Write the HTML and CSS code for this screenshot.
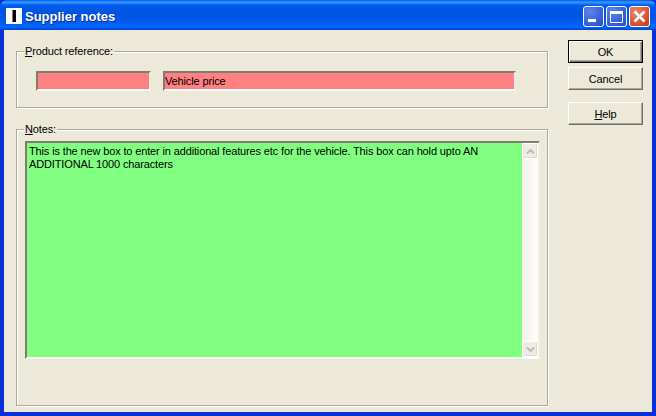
FILE: index.html
```html
<!DOCTYPE html>
<html lang="en">
<head>
<meta charset="utf-8">
<title>Supplier notes</title>
<link rel="stylesheet" href="styles.css">
</head>
<body>
<div class="window">
  <header class="titlebar">
    <span class="app-icon"><span class="app-icon-bar"></span></span>
    <span class="title">Supplier notes</span>
    <div class="caption-buttons">
      <span class="cap cap-blue">
        <svg width="21" height="21" viewBox="0 0 21 21"><rect x="5" y="13" width="8" height="3" fill="#fff"/></svg>
      </span>
      <span class="cap cap-blue">
        <svg width="21" height="21" viewBox="0 0 21 21"><path d="M4.5 6.5h12v10h-12z" fill="none" stroke="#fff"/><rect x="4" y="5" width="13" height="3" fill="#fff"/></svg>
      </span>
      <span class="cap cap-red">
        <svg width="21" height="21" viewBox="0 0 21 21"><path d="M5.5 5.5l10 10M15.5 5.5l-10 10" stroke="#fff" stroke-width="2.6" fill="none"/></svg>
      </span>
    </div>
  </header>
  <main class="client">
    <div class="left">
      <fieldset class="group group-ref">
        <legend class="group-label"><u>P</u>roduct reference:</legend>
        <div class="ref-row">
          <span class="field field-short"></span>
          <span class="field field-long">Vehicle price</span>
        </div>
      </fieldset>
      <fieldset class="group group-notes">
        <legend class="group-label"><u>N</u>otes:</legend>
        <div class="memo">
          <div class="memo-text">This is the new box to enter in additional features etc for the vehicle. This box can hold upto AN ADDITIONAL 1000 characters</div>
          <div class="scrollbar">
            <span class="sb-btn">
              <svg width="9" height="7" viewBox="0 0 9 7"><path d="M1 5.5l3.5-3.5 3.5 3.5" fill="none" stroke="#bdbaae" stroke-width="2"/></svg>
            </span>
            <span class="sb-track"></span>
            <span class="sb-btn">
              <svg width="9" height="7" viewBox="0 0 9 7"><path d="M1 1.5l3.5 3.5 3.5-3.5" fill="none" stroke="#bdbaae" stroke-width="2"/></svg>
            </span>
          </div>
        </div>
      </fieldset>
    </div>
    <div class="actions">
      <button class="btn btn-default" type="button">OK</button>
      <button class="btn" type="button">Cancel</button>
      <button class="btn btn-help" type="button"><u>H</u>elp</button>
    </div>
  </main>
</div>
</body>
</html>
```

FILE: styles.css
```css
* { box-sizing: border-box; }
html, body { margin: 0; padding: 0; }
body {
  width: 656px;
  height: 416px;
  overflow: hidden;
  background: #0831d9;
  font-family: "Liberation Sans", Arial, sans-serif;
  font-size: 11px;
  letter-spacing: -0.14px;
  color: #000;
}
.window {
  width: 656px;
  height: 416px;
  display: flex;
  flex-direction: column;
}
.titlebar {
  height: 30px;
  flex: none;
  display: flex;
  align-items: center;
  padding: 0 6px;
  border-radius: 7px 7px 0 0;
  background: linear-gradient(180deg, #0058ee 0, #3a93ff 2px, #288eff 3px, #0060f0 5px, #0055e5 9px, #0055e5 18px, #0062f7 25px, #0066ff 27px, #005bf0 28px, #0040d0 30px);
}
.app-icon {
  width: 16px;
  height: 16px;
  flex: none;
  background: #fff;
  display: flex;
  justify-content: center;
  align-items: center;
  margin-top: 2px;
}
.app-icon-bar {
  width: 4px;
  height: 12px;
  background: #000;
  border-left: 1px solid #777;
}
.title {
  margin-left: 3px;
  margin-top: 3px;
  color: #fff;
  font-weight: bold;
  font-size: 13px;
  letter-spacing: 0;
  text-shadow: 1px 1px 0 #0a2a9a;
}
.caption-buttons {
  margin-left: auto;
  display: flex;
  gap: 2px;
  margin-top: 3px;
}
.cap {
  width: 21px;
  height: 21px;
  border: 1px solid #fff;
  border-radius: 3px;
  display: block;
  overflow: hidden;
}
.cap svg { display: block; margin: -1px; }
.cap-blue { background: radial-gradient(circle at 30% 25%, #5a86f0 0, #3c64dc 55%, #2a48c0 100%); }
.cap-red { background: radial-gradient(circle at 30% 25%, #e8866a 0, #d9593a 55%, #b83a1c 100%); }

.client {
  flex: 1;
  display: flex;
  margin: 0 4px 4px;
  padding: 14px 9px 0 12px;
  background: #ece9d8;
  gap: 20px;
}
.left {
  width: 532px;
  display: flex;
  flex-direction: column;
  flex: none;
}
.group {
  margin: 0;
  padding: 0;
  min-width: 0;
  border: 1px solid #aca899;
  box-shadow: 1px 1px 0 #fff, inset 1px 1px 0 #fff;
}
.group-label {
  margin-left: 7px;
  padding: 1px 1px 0;
  height: 14px;
  line-height: 13px;
  background: #ece9d8;
}
.group-ref { height: 64px; }
.group-notes { height: 284px; margin-top: 14px; }
.ref-row {
  display: flex;
  gap: 12px;
  padding: 13px 0 0 19px;
}
.field {
  height: 20px;
  display: block;
  background: #ff8080;
  border: 2px solid;
  border-color: #7f7c70 #f1efe2 #fff #7f7c70;
  line-height: 16px;
}
.field-short { width: 115px; }
.field-long { width: 353px; }
.memo {
  margin: 5px 0 0 8px;
  width: 515px;
  height: 218px;
  display: flex;
  border: 2px solid;
  border-color: #7f7c70 #f1efe2 #fff #7f7c70;
}
.memo-text {
  flex: 1;
  background: #80ff80;
  padding: 2px;
  line-height: 13px;
}
.scrollbar {
  width: 16px;
  flex: none;
  display: flex;
  flex-direction: column;
  background: linear-gradient(90deg, #f3f1ec, #fefefb);
}
.sb-btn {
  width: 16px;
  height: 16px;
  flex: none;
  display: flex;
  align-items: center;
  justify-content: center;
  background: #eeede5;
  border: 1px solid #fff;
  border-radius: 2px;
  box-shadow: inset -1px -1px 0 #dcdbd0;
}
.sb-track { flex: 1; }

.actions {
  width: 75px;
  flex: none;
  margin-top: -4px;
  display: flex;
  flex-direction: column;
  gap: 4px;
}
.btn {
  width: 75px;
  height: 23px;
  padding: 0;
  background: #ece9d8;
  font: inherit;
  letter-spacing: inherit;
  color: #000;
  border: 1px solid;
  border-color: #fff #716f64 #716f64 #fff;
  box-shadow: inset -1px -1px 0 #aca899;
}
.btn-default {
  border: 1px solid #000;
  box-shadow: inset 1px 1px 0 #fff, inset -1px -1px 0 #716f64, inset -2px -2px 0 #aca899;
}
.btn-help { margin-top: 8px; }
```
